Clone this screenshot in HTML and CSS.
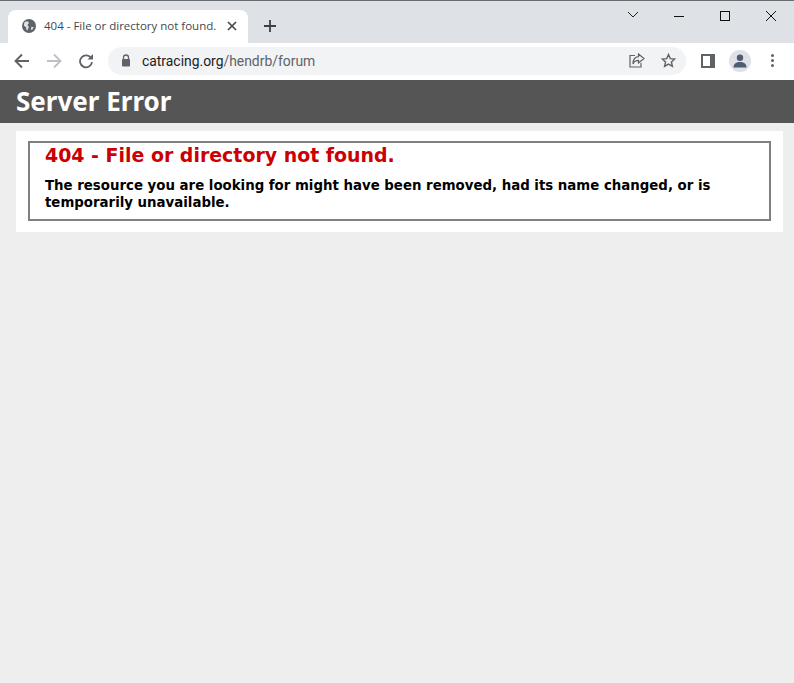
FILE: index.html
```html
<!DOCTYPE html>
<html lang="en">
<head>
<meta charset="utf-8">
<title>404 - File or directory not found.</title>
<link rel="stylesheet" href="styles.css">
</head>
<body>
<div class="browser">
  <div class="tabstrip">
    <div class="tab">
      <svg class="fav" width="16" height="16" viewBox="0 0 16 16"><circle cx="8" cy="8" r="7" fill="#5f6368"/><path d="M3.500 4 L6.500 3.200 L8 5 L6.500 7 L7.800 8.800 L6.500 12.500 L5.300 11.500 L5.200 9.500 L2.800 7.500Z M10.500 8.800 L12.800 9.300 L11 12 L9.800 11.200Z" fill="#dee1e6"/></svg>
      <span class="tabtitle">404 - File or directory not found.</span>
      <svg class="tabx" width="10" height="10" viewBox="0 0 10 10"><path d="M1 1 9 9M9 1 1 9" stroke="#45484c" stroke-width="1.700" fill="none"/></svg>
    </div>
    <svg class="newtab" width="12" height="12" viewBox="0 0 12 12"><path d="M6 0v12M0 6h12" stroke="#3c4043" stroke-width="1.800" fill="none"/></svg>
    <div class="winctrl">
      <svg class="wc" width="46" height="14" viewBox="0 0 46 14"><path d="M18 3 L23 8 L28 3" stroke="#222" fill="none"/></svg>
      <svg class="wc" width="46" height="14" viewBox="0 0 46 14"><path d="M18 7.500h10" stroke="#111" fill="none"/></svg>
      <svg class="wc" width="46" height="14" viewBox="0 0 46 14"><rect x="18.500" y="2.500" width="9" height="9" stroke="#111" fill="none"/></svg>
      <svg class="wc" width="46" height="14" viewBox="0 0 46 14"><path d="M18 2 L28 12M28 2 L18 12" stroke="#111" fill="none"/></svg>
    </div>
  </div>
  <div class="toolbar">
    <svg class="nav" width="16" height="16" viewBox="0 0 16 16"><path d="M15 8H2M8 1.500 1.500 8 8 14.500" stroke="#5f6368" stroke-width="1.900" fill="none"/></svg>
    <svg class="nav" width="16" height="16" viewBox="0 0 16 16"><path d="M1 8H14M8 1.500 14.500 8 8 14.500" stroke="#bdc1c6" stroke-width="1.900" fill="none"/></svg>
    <svg class="nav" width="16" height="16" viewBox="0 0 16 16"><path d="M13.300 5.500A6 6 0 1 0 14 9" stroke="#5f6368" stroke-width="1.800" fill="none"/><path d="M9.500 6.500H15V1Z" fill="#5f6368"/></svg>
    <div class="omnibox">
      <svg class="lock" width="10" height="13" viewBox="0 0 10 13"><path d="M2.500 5V3.500a2.500 2.500 0 0 1 5 0V5" stroke="#5f6368" stroke-width="1.300" fill="none"/><rect x="1" y="5" width="8" height="7.500" rx="1" fill="#5f6368"/></svg>
      <span class="url"><span class="host">catracing.org</span>/hendrb/forum</span>
      <svg class="share" width="16" height="15" viewBox="0 0 16 15"><path d="M6 2.500H1V14H12V10" stroke="#5f6368" stroke-width="1.200" fill="none"/><path d="M9.500 1 15 5.500 9.500 10V7.300C7 7.300 5 8.500 4 11 4 7 6 4 9.500 3.700Z" stroke="#5f6368" stroke-width="1.200" fill="none"/></svg>
      <svg class="star" width="15" height="15" viewBox="0 0 15 15"><path d="M7.500 1.500 9.300 5.600 13.800 6 10.400 9 11.400 13.400 7.500 11.100 3.600 13.400 4.600 9 1.200 6 5.700 5.600Z" stroke="#5f6368" stroke-width="1.400" fill="none"/></svg>
    </div>
    <svg class="side" width="14" height="14" viewBox="0 0 14 14"><rect width="14" height="14" fill="#5f6368"/><rect x="2" y="2" width="7" height="10" fill="#fff"/></svg>
    <div class="avatar"><svg width="14" height="14" viewBox="0 0 14 14"><circle cx="7" cy="3.800" r="3.200" fill="#4f5b70"/><path d="M0.500 13.500C0.500 9.500 3.500 8 7 8s6.500 1.500 6.500 5.500Z" fill="#4f5b70"/></svg></div>
    <div class="menu"><i></i><i></i><i></i></div>
  </div>
</div>
<div class="header"><h1>Server Error</h1></div>
<div class="content">
  <div class="content-container">
    <fieldset>
      <h2>404 - File or directory not found.</h2>
      <h3>The resource you are looking for might have been removed, had its name changed, or is temporarily unavailable.</h3>
    </fieldset>
  </div>
</div>
</body>
</html>
```

FILE: styles.css
```css
* { box-sizing: border-box; }
html, body { margin: 0; height: 100%; }
body { background: #eeeeee; font-family: "DejaVu Sans", Verdana, sans-serif; overflow: hidden; }
.browser { background: #fff; height: 80px; border-top: 1px solid #6a6d70; }
.tabstrip { height: 42px; background: #dee1e6; display: flex; align-items: flex-end; padding-left: 8px; position: relative; }
.tab { width: 240px; height: 33px; background: #fff; border-radius: 8px 8px 0 0; display: flex; align-items: center; padding: 0 11px 2px 13px; }
.fav { flex: none; }
.tabtitle { font: 11.500px "Open Sans", "Noto Sans", sans-serif; color: #45484c; margin-left: 7px; white-space: nowrap; flex: 1; overflow: hidden; }
.tabx { flex: none; }
.newtab { margin: 0 0 11px 16px; flex: none; }
.winctrl { margin-left: auto; align-self: flex-start; display: flex; padding-top: 8px; }
.wc { display: block; }
.toolbar { height: 37px; display: flex; align-items: center; padding: 0 14px 2px 14px; background: #fff; }
.nav { margin-right: 16px; flex: none; }
.nav:nth-child(3) { margin-right: 14px; }
.omnibox { width: 578px; height: 28px; border-radius: 14px; background: #f1f3f4; display: flex; align-items: center; padding: 0 10px 0 13px; }
.lock { flex: none; }
.url { font: 13.900px "Roboto", "Liberation Sans", sans-serif; color: #5f6368; margin-left: 11px; flex: 1; }
.host { color: #202124; }
.share { flex: none; margin-right: 16px; }
.star { flex: none; }
.side { margin-left: 15px; flex: none; }
.avatar { width: 22px; height: 22px; border-radius: 50%; background: #dee1e6; margin-left: 14px; display: flex; align-items: center; justify-content: center; flex: none; }
.menu { margin-left: 20px; display: flex; flex-direction: column; gap: 2px; flex: none; }
.menu i { display: block; width: 3px; height: 3px; border-radius: 50%; background: #5f6368; }
.header { background: #555555; height: 43px; padding-left: 16px; }
.header h1 { margin: 0; font: bold 26px/43px "Trebuchet MS", "Noto Sans", "Open Sans", sans-serif; color: #fff; }
.content { padding: 8px 11px 0 16px; }
.content-container { background: #fff; padding: 10px 12px 11px 12px; height: 101px; }
fieldset { margin: 0; height: 80px; border: 2px solid #808080; padding: 0 15px; min-width: 0; }
h2 { margin: 0; padding-top: 1px; font: bold 18.950px/23px "DejaVu Sans", Verdana, sans-serif; color: #cc0000; }
h3 { margin: 10px 0 0; font: bold 13.330px/17px "DejaVu Sans", Verdana, sans-serif; color: #000; }
```
